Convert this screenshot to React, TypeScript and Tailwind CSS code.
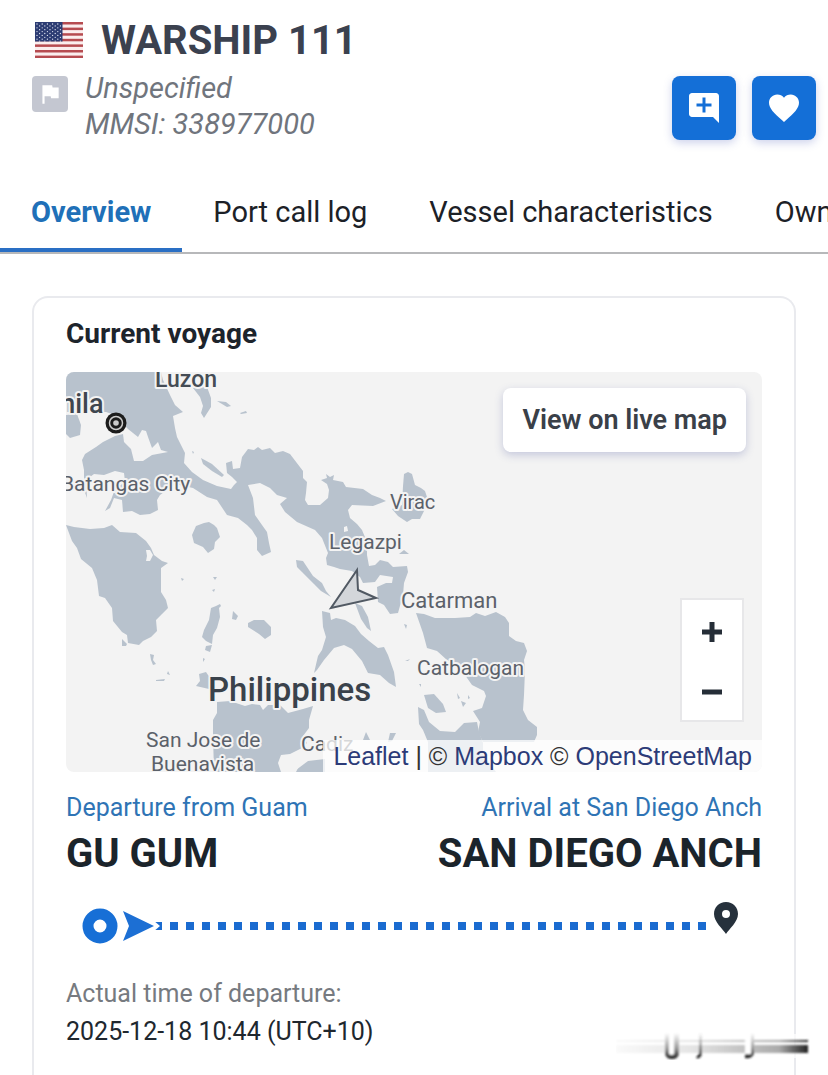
import { MdAddComment, MdFavorite, MdFlag } from "react-icons/md";

interface MapLabel {
  text: string;
  x: number;
  y: number;
  size: number;
  weight: number;
  color: string;
}

const tabs = ["Overview", "Port call log", "Vessel characteristics", "Ownership"];

const mapLabels: MapLabel[] = [
  { text: "Luzon", x: 155, y: 387, size: 23, weight: 500, color: "#454c55" },
  { text: "Manila", x: 22, y: 413, size: 27, weight: 500, color: "#3f464f" },
  { text: "Batangas City", x: 61, y: 491, size: 21, weight: 400, color: "#5b616a" },
  { text: "Virac", x: 390, y: 509, size: 20, weight: 400, color: "#5b616a" },
  { text: "Legazpi", x: 329, y: 549, size: 21, weight: 400, color: "#5b616a" },
  { text: "Catarman", x: 401, y: 608, size: 22, weight: 400, color: "#5b616a" },
  { text: "Catbalogan", x: 417, y: 675, size: 21, weight: 400, color: "#5b616a" },
  { text: "Philippines", x: 208, y: 701, size: 33, weight: 500, color: "#3a424b" },
  { text: "San Jose de", x: 146, y: 747, size: 21, weight: 400, color: "#5b616a" },
  { text: "Buenavista", x: 151, y: 771, size: 21, weight: 400, color: "#5b616a" },
  { text: "Cadiz", x: 301, y: 751, size: 21, weight: 400, color: "#5b616a" },
];

const land = [
  // Luzon and the Bicol peninsula
  "M66 372H161L163 380L170 395L175 405L183 412L173 416L175 428L177 437L185 453L184 463L192 472L203 480L217 486L231 489L234 485L237 482L232 477L227 473L226 463L232 461L233 469L240 468L242 457L248 449L254 450L258 447L262 450L270 448L275 453L283 451L290 454L303 471L303 478L307 482L306 493L305 500L308 505L320 505L328 498L329 490L327 484L321 480L327 478L326 474L330 477L334 475L333 480L343 482L346 487L363 489L372 495L380 498L386 501L373 506L352 505L348 510L350 518L357 524L362 530L367 542L367 555L369 566L375 565L380 560L388 562L393 567L407 566L408 572L404 583L403 595L398 613L390 614L384 605L378 602L377 587L386 583L392 583L393 577L380 575L375 582L363 583L360 577L352 571L340 569L334 567L327 565L326 558L328 553L322 538L315 530L297 522L285 512L280 504L287 498L277 495L270 488L260 483L248 485L253 498L255 515L262 525L267 532L269 543L271 552L262 556L257 550L257 538L252 530L247 525L238 518L227 515L217 500L207 497L193 488L175 484L160 495L157 500L158 510L150 514L140 515L132 511L123 512L122 500L114 498L110 508L105 511L111 500L115 489L125 482L124 473L115 471L104 475L94 474L86 480L87 498L84 490L84 470L82 460L85 454L96 447L103 442L115 436L123 434L124 442L131 449L134 461L143 461L152 455L168 452L161 450L158 442L152 448L148 437L146 431L142 430L138 437L128 429L115 415L106 412H66Z",
  "M66 415L77 414L81 425L80 435L70 438L66 434Z",
  // Polillo and the Camarines islets
  "M193 388L207 387L211 398L211 407L204 418L201 413L203 406L200 397Z",
  "M217 401L226 402L231 406L227 407Z",
  "M240 413L246 411L247 413L241 414Z",
  "M201 458L212 464L224 475L222 477L212 471L203 464Z",
  "M192 451L194 452L193 454Z",
  // Mindoro
  "M66 525L74 527L90 529L104 528L112 525L120 532L136 533L146 541L151 548L154 555L162 561L168 563L161 568L161 592L166 600L168 608L162 614L156 620L157 631L151 637L143 641L139 645L128 643L127 635L122 632L113 621L112 608L105 598L99 596L97 580L92 568L81 559L77 548L72 541Z",
  "M122 639L127 644L126 646L122 646Z",
  "M150 654L154 655L153 660L156 664L153 665L151 660Z",
  "M156 680L165 679L164 681L156 681Z",
  "M168 671L170 675L167 674Z",
  // Marinduque
  "M196 526L204 523L209 522L214 525L217 528L220 537L215 542L214 549L208 553L203 547L194 543L192 535Z",
  // Romblon group
  "M211 608L216 606L220 604L221 606L219 608L220 617L217 628L213 635L212 644L206 641L202 637L204 630L207 624L209 620Z",
  "M206 646L212 645L210 652L205 650Z",
  "M203 658L205 659L203 662Z",
  "M233 611L238 616L236 620L232 619Z",
  "M248 623L254 620L264 620L271 627L271 635L265 639L259 634L248 627Z",
  "M213 577L217 577L215 580Z",
  "M181 578L184 579L182 581Z",
  "M212 590L215 589L214 592Z",
  "M199 674L206 672L210 678L209 689L196 686L200 681Z",
  // Burias and Ticao
  "M296 560L303 561L307 567L313 576L322 583L326 591L331 597L321 591L314 584L302 572L297 567Z",
  "M355 603L362 606L368 617L371 631L367 628L361 619Z",
  // Masbate
  "M322 611L330 613L331 620L336 618L345 620L355 626L361 634L369 641L378 648L384 647L388 655L394 672L396 687L389 683L380 675L368 673L362 661L352 649L344 645L334 648L324 660L317 670L314 673L318 656L322 650L326 637L323 627Z",
  // Catanduanes
  "M403 486L404 474L408 472L412 474L415 485L421 488L425 491L428 500L424 511L420 519L412 519L407 522L398 516L392 509L402 505Z",
  "M399 554L404 550L409 554Z",
  // Samar
  "M416 613L424 614L435 618L455 618L470 617L476 613L485 616L496 612L505 617L509 623L509 636L516 641L524 643L527 651L524 660L525 670L524 695L523 710L528 720L537 727L537 735L534 742H483L478 732L480 722L473 711L482 708L486 696L484 691L472 685L460 668L447 660L437 651L427 648L423 633Z",
  // Biliran and Leyte
  "M424 695L434 694L443 704L446 712L436 713L428 708Z",
  "M418 707L424 710L429 722L440 731L455 732L464 723L477 722L479 732L483 743V754L496 772H428V742L423 730L419 724Z",
  "M457 693L460 698L458 699Z",
  "M461 701L466 703L463 707Z",
  "M468 695L470 698L468 699Z",
  "M419 684L421 684L421 687Z",
  "M405 661L410 659L408 661Z",
  "M404 624L407 625L406 629Z",
  // Panay, Cebu and Negros
  "M217 702L230 701L245 706L252 704L260 705L263 710L268 705L280 705L288 713L303 709L313 706L309 720L309 728L303 736L307 743L296 755L281 758L285 772H214L213 735L213 720L217 713Z",
  "M296 770L308 761L325 759V772H296Z",
  "M366 732L370 740L363 740Z",
  "M390 733L396 733L392 741L388 742Z",
];

// Bays and straits that cut into the land shapes
const water = ["M146 550L150 550L153 555L150 561L146 561L147 556Z", "M344 527L347 526L348 531L344 532Z", "M278 763L281 755L290 754L302 748V760L296 772H281Z"];

const flagStripes = [0, 1, 2, 3, 4, 5, 6];
const flagStars = Array.from({ length: 50 }, (_, i) => ({
  x: 2 + (i % 10) * 2.6,
  y: 2 + Math.floor(i / 10) * 3.8 + (i % 2) * 1.9,
}));

function UsFlag() {
  return (
    <svg width="48" height="36" viewBox="0 0 48 36" role="img" aria-label="United States">
      <rect width="48" height="36" fill="#fbeeee" />
      {flagStripes.map((i) => (
        <rect key={i} y={i * 5.6} width="48" height="2.5" fill="#b64b50" />
      ))}
      <rect width="27.5" height="19.5" fill="#2c3c73" />
      {flagStars.map((star, i) => (
        <circle key={i} cx={star.x} cy={star.y} r="0.65" fill="#e4e8f4" />
      ))}
    </svg>
  );
}

function VesselHeader() {
  return (
    <header className="pt-5 pl-8 pr-3">
      <div className="flex h-10 items-center gap-[18px] pl-[3px]">
        <UsFlag />
        <h1 className="pt-0.5 text-[40px] leading-10 font-bold text-[#3b414f]">WARSHIP 111</h1>
      </div>
      <div className="mt-4 flex items-start">
        <div className="flex size-9 items-center justify-center rounded-[4px] bg-[#c4c7d1] text-white">
          <MdFlag size={26} />
        </div>
        <div className="-mt-1.5 ml-[17px] flex-1 text-[29px] leading-9 text-[#70757d] italic">
          <p>Unspecified</p>
          <p>MMSI: 338977000</p>
        </div>
        <div className="flex gap-4">
          <button aria-label="Add note" className="flex size-16 items-center justify-center rounded-lg bg-[#146fd7] text-white shadow-[0_3px_8px_rgba(60,80,180,0.25)]">
            <MdAddComment size={36} />
          </button>
          <button aria-label="Add to favourites" className="flex size-16 items-center justify-center rounded-lg bg-[#146fd7] text-white shadow-[0_3px_8px_rgba(60,80,180,0.25)]">
            <MdFavorite size={36} />
          </button>
        </div>
      </div>
    </header>
  );
}

function Tabs() {
  return (
    <nav className="mt-8 flex h-20 overflow-hidden border-b-2 border-[#b7b8ba]">
      {tabs.map((tab, i) => (
        <a
          key={tab}
          href="#"
          className={`flex shrink-0 items-center border-b-4 px-[31px] pt-0.5 text-[29px] leading-8 ${
            i === 0 ? "border-[#2a6fc4] font-bold text-[#2070b8]" : "border-transparent text-[#1c2127]"
          }`}
        >
          {tab}
        </a>
      ))}
    </nav>
  );
}

function VoyageMap() {
  return (
    <div className="relative h-[400px] overflow-hidden rounded-lg bg-[#f3f3f3]">
      <svg className="block h-full w-full" viewBox="66 372 696 400" preserveAspectRatio="xMinYMin slice">
        <g fill="#b8c2cd">
          {land.map((d) => (
            <path key={d} d={d} />
          ))}
        </g>
        <g fill="#f3f3f3">
          {water.map((d) => (
            <path key={d} d={d} />
          ))}
        </g>
        <g fontFamily="Roboto, sans-serif" stroke="#f3f3f3" strokeWidth="4" strokeLinejoin="round" paintOrder="stroke">
          {mapLabels.map((label) => (
            <text key={label.text} x={label.x} y={label.y} fontSize={label.size} fontWeight={label.weight} fill={label.color}>
              {label.text}
            </text>
          ))}
        </g>
        {/* Capital marker */}
        <circle cx="116" cy="423" r="10.5" fill="#1c1c1c" />
        <circle cx="116" cy="423" r="6.5" fill="none" stroke="#ccc" strokeWidth="1.5" />
        <circle cx="116" cy="423" r="2.8" fill="#ccc" />
        {/* Vessel position */}
        <path d="M357 570L331 608L376 598L358 590Z" fill="#d3d6da" stroke="#515963" strokeWidth="2" />
      </svg>

      <button className="absolute top-4 right-4 h-16 rounded-lg bg-white px-[19px] text-[27px] font-semibold text-[#3a4048] shadow-[0_3px_8px_rgba(60,70,150,0.25)]">
        View on live map
      </button>

      <div className="absolute right-[18px] bottom-[50px] flex flex-col border-2 border-[#e7e7e9] bg-white text-[#252d37]">
        <button aria-label="Zoom in" className="flex h-[60px] w-[60px] items-center justify-center pt-1">
          <svg width="20" height="20" viewBox="0 0 20 20" stroke="currentColor" strokeWidth="5">
            <path d="M0 10H20M10 0V20" />
          </svg>
        </button>
        <button aria-label="Zoom out" className="flex h-[60px] w-[60px] items-center justify-center pt-1">
          <svg width="20" height="20" viewBox="0 0 20 20" stroke="currentColor" strokeWidth="5">
            <path d="M0 10H20" />
          </svg>
        </button>
      </div>

      <div className="absolute right-0 bottom-0 h-8 bg-white/75 pr-2.5 pl-2.5 font-['Liberation_Sans',sans-serif] text-[25px] leading-8 whitespace-nowrap text-[#333]">
        <a href="#" className="text-[#2c3b78]">Leaflet</a> | © <a href="#" className="text-[#2c3b78]">Mapbox</a> ©{" "}
        <a href="#" className="text-[#2c3b78]">OpenStreetMap</a>
      </div>
    </div>
  );
}

function RouteLine() {
  return (
    <div className="mt-[30px] flex h-9 items-center pr-6 pl-4">
      <svg width="36" height="36" viewBox="0 0 36 36">
        <circle cx="18" cy="18" r="12" fill="none" stroke="#176fd6" strokeWidth="11" />
      </svg>
      <svg className="relative ml-1 overflow-visible" width="32" height="32" viewBox="0 0 32 32">
        <path d="M31 10L38 16L31 22Z" fill="#fff" />
        <path d="M1 1L32 16L1 31L7 16Z" fill="#1c6fd4" />
      </svg>
      <div className="-z-10 h-2 flex-1 bg-[repeating-linear-gradient(90deg,#1a6bd0_0_8px,transparent_8px_16px)]" />
      <svg className="mb-4 ml-2" width="24" height="32" viewBox="0 0 24 32">
        <path d="M12 0C5 0 0 5 0 12C0 20 9 27 12 32C15 27 24 20 24 12C24 5 19 0 12 0ZM12 8A4 4 0 1 1 12 16A4 4 0 0 1 12 8Z" fill="#26313c" fillRule="evenodd" />
      </svg>
    </div>
  );
}

function CurrentVoyage() {
  return (
    <section className="relative z-0 mx-8 mt-[42px] flex-1 rounded-t-2xl border-2 border-b-0 border-[#e9eaee] px-8 pt-[18px] pb-6">
      <h2 className="text-[28px] leading-9 font-bold text-[#1d242c]">Current voyage</h2>
      <div className="mt-5">
        <VoyageMap />
      </div>
      <div className="mt-5 flex justify-between">
        <div>
          <p className="text-[25px] leading-8 text-[#2f74b5]">Departure from Guam</p>
          <p className="mt-1.5 text-[40px] leading-[48px] font-bold text-[#1b242b]">GU GUM</p>
        </div>
        <div className="text-right">
          <p className="text-[25px] leading-8 text-[#2f74b5]">Arrival at San Diego Anch</p>
          <p className="mt-1.5 text-[40px] leading-[48px] font-bold text-[#1b242b]">SAN DIEGO ANCH</p>
        </div>
      </div>
      <RouteLine />
      <dl className="mt-8 text-[25px]">
        <dt className="leading-9 text-[#767a80]">Actual time of departure:</dt>
        <dd className="leading-10 text-[#20272e]">2025-12-18 10:44 (UTC+10)</dd>
      </dl>
    </section>
  );
}

// Faded smear in the bottom corner
function Smear() {
  return (
    <svg className="absolute right-[18px] bottom-4 z-10" width="194" height="28" viewBox="0 0 194 28" aria-hidden="true">
      <defs>
        <linearGradient id="across">
          <stop offset="0" stopColor="#fafafa" />
          <stop offset="0.4" stopColor="#e4e4e4" />
          <stop offset="0.85" stopColor="#aaa" />
          <stop offset="1" stopColor="#222" />
        </linearGradient>
        <linearGradient id="down" x2="0" y2="1">
          <stop offset="0" stopColor="#555" stopOpacity="0" />
          <stop offset="0.6" stopColor="#555" stopOpacity="0.6" />
          <stop offset="1" stopColor="#111" />
        </linearGradient>
        <filter id="soft">
          <feGaussianBlur stdDeviation="0.8" />
        </filter>
      </defs>
      <rect y="2" width="192" height="24" fill="#fff" opacity="0.7" />
      <g filter="url(#soft)">
        <rect y="8" width="192" height="2" fill="url(#across)" />
        <rect y="13" width="192" height="8" fill="url(#across)" />
        <path d="M49 1H63V22Q62 26 56 26Q50 26 49 22Z" fill="#fff" />
        <path d="M49 1H53V22Q56 24 58 22V1H63V22Q62 27 56 27Q50 27 49 22Z" fill="url(#down)" />
        <path d="M83 1H86V22Q85 27 80 26L83 21Z" fill="url(#down)" />
        <path d="M129 1H138V22Q136 26 129 24Z" fill="#fff" />
        <path d="M135 1H138V22Q136 27 129 26L129 22L135 22Z" fill="url(#down)" />
      </g>
    </svg>
  );
}

export default function App() {
  return (
    <div className="relative flex min-h-screen flex-col overflow-hidden bg-white font-['Roboto',sans-serif]">
      <VesselHeader />
      <Tabs />
      <CurrentVoyage />
      <Smear />
    </div>
  );
}
